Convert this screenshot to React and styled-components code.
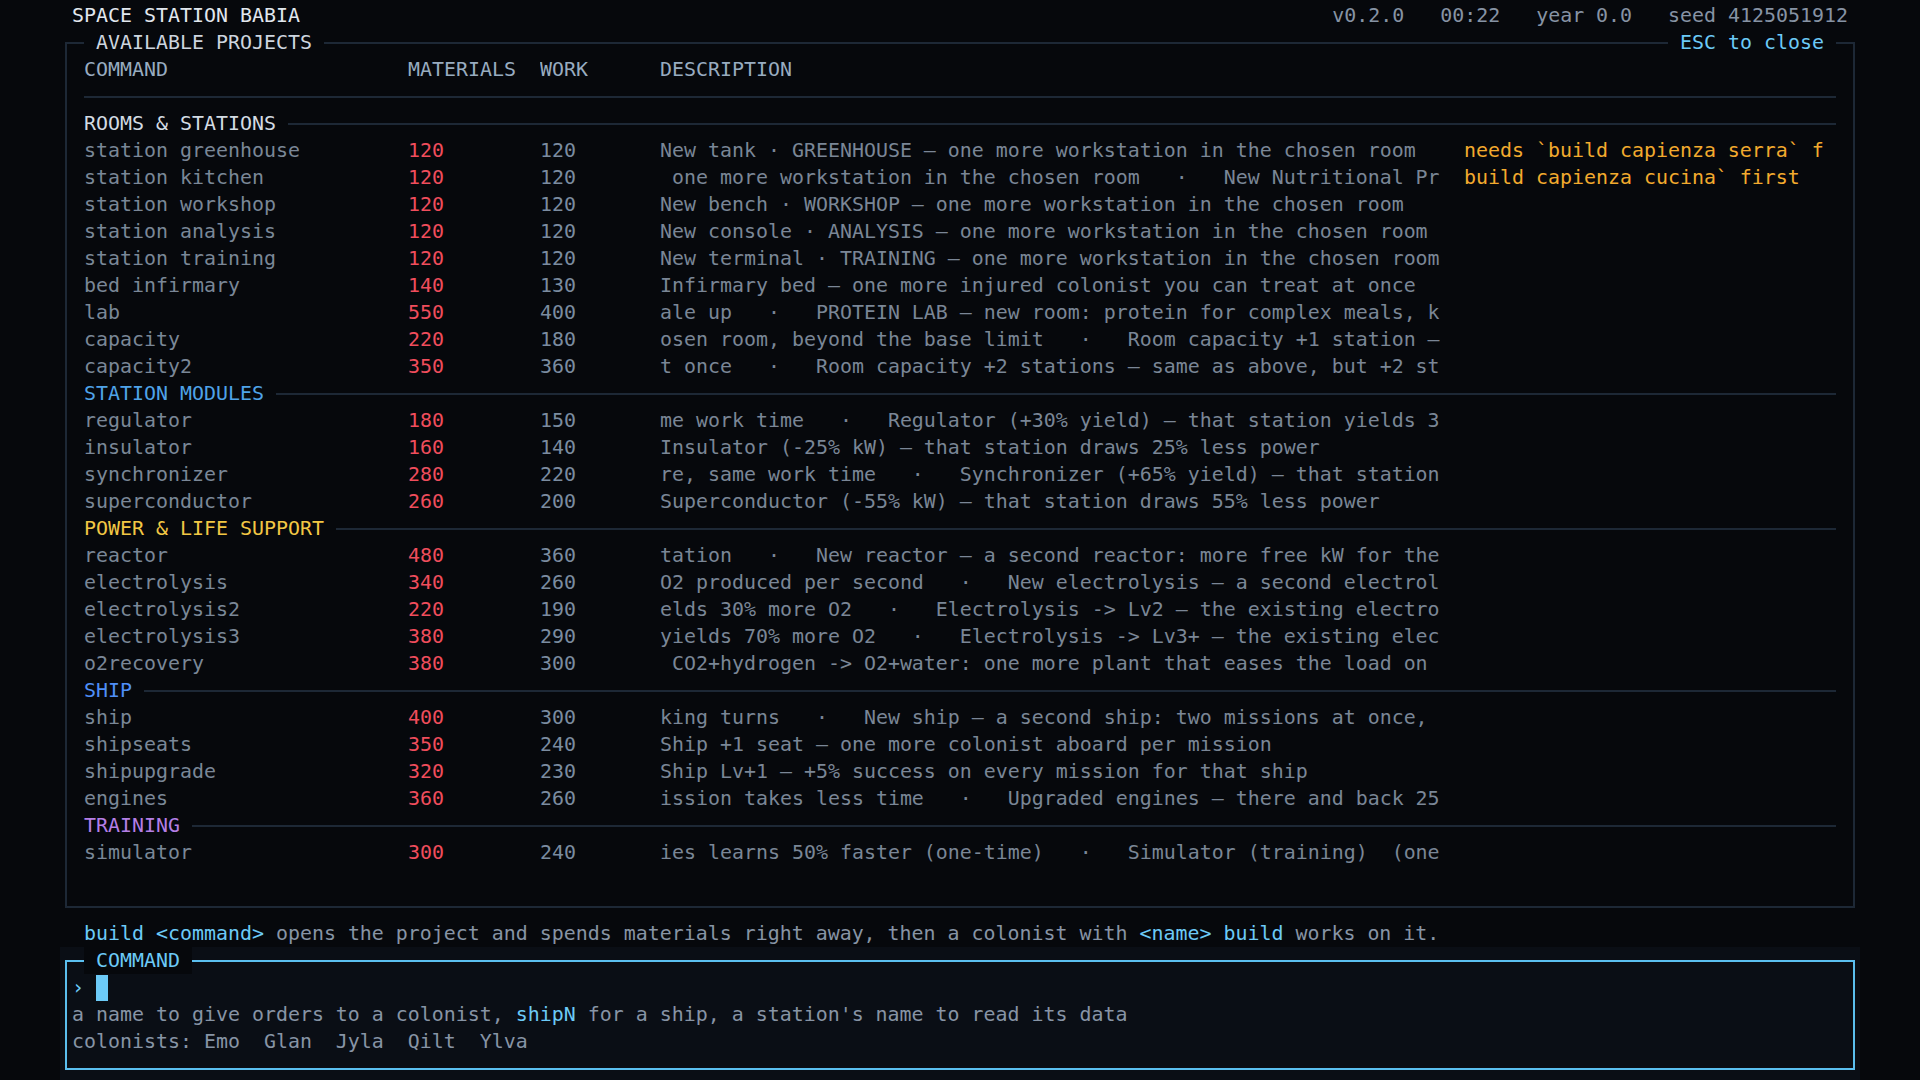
import React from "react";
import styled, { createGlobalStyle } from "styled-components";

const C = {
  bg: "#06080c",
  bgCmd: "#0a0e15",
  border: "#1d2836",
  title: "#e1e7ee",
  status: "#8693a4",
  label: "#cdd5df",
  head: "#98acc0",
  cmd: "#7a8797",
  mat: "#f04d5c",
  work: "#7b8ca0",
  desc: "#7a8696",
  note: "#f2aa2e",
  cyan: "#6ccaf7",
  cmdBorder: "#5bbff0",
  hint: "#8794a5",
};

const Global = createGlobalStyle`
  html, body { margin: 0; padding: 0; background: ${C.bg}; }
  body {
    font-family: "DejaVu Sans Mono", "Liberation Mono", monospace;
    font-size: 19.93px;
    line-height: 27px;
    color: ${C.desc};
    overflow: hidden;
  }
`;

const Screen = styled.div`
  width: 1920px;
  height: 1080px;
  box-sizing: border-box;
  padding-top: 2px;
  background: ${C.bg};
  display: flex;
  flex-direction: column;
  overflow: hidden;
`;

const TopBar = styled.div`
  height: 27px;
  padding: 0 72px;
  display: flex;
  justify-content: space-between;
  white-space: pre;
`;

const AppTitle = styled.span`
  color: ${C.title};
`;

const Status = styled.span`
  color: ${C.status};
`;

const Panel = styled.section`
  position: relative;
  box-sizing: border-box;
  height: 866px;
  margin: 13px 65px 12px 65px;
  border: 2px solid ${C.border};
  padding: 12px 17px 13px 17px;
`;

const Legend = styled.span`
  position: absolute;
  top: -15px;
  ${(p) => (p.$right ? "right: 17px;" : "left: 17px;")}
  height: 27px;
  padding: 0 12px;
  background: ${C.bg};
  color: ${(p) => p.$color};
  white-space: pre;
`;

const Row = styled.div`
  display: grid;
  grid-template-columns: 324px 132px 120px 780px 384px;
  height: 27px;
  white-space: pre;
`;

const Cell = styled.span`
  color: ${(p) => p.$color};
  overflow: hidden;
`;

const NoteCell = styled.span`
  color: ${C.note};
  padding-left: 24px;
`;

const Separator = styled.div`
  height: 27px;
  display: flex;
  align-items: center;
  &::after {
    content: "";
    flex: 1;
    height: 2px;
    background: ${C.border};
  }
`;

const Section = styled.div`
  height: 27px;
  display: flex;
  align-items: center;
  gap: 12px;
  white-space: pre;
  color: ${(p) => p.$color};
  &::after {
    content: "";
    flex: 1;
    height: 2px;
    background: ${C.border};
  }
`;

const Hint = styled.div`
  height: 27px;
  padding-left: 84px;
  white-space: pre;
  color: ${C.hint};
`;

const Accent = styled.span`
  color: ${C.cyan};
`;

const CommandArea = styled.div`
  flex: 1;
  margin: 0 60px;
  padding: 13px 5px 0 5px;
  background: ${C.bgCmd};
`;

const CommandBox = styled.div`
  position: relative;
  border: 2px solid ${C.cmdBorder};
  padding: 12px 5px 13px 5px;
`;

const Line = styled.div`
  height: 27px;
  white-space: pre;
  color: ${C.hint};
  display: flex;
  align-items: center;
`;

const Prompt = styled.span`
  color: ${C.cyan};
  width: 24px;
`;

const Cursor = styled.span`
  display: inline-block;
  width: 12px;
  height: 26px;
  background: ${C.cyan};
`;

const sections = [
  {
    name: "ROOMS & STATIONS",
    color: "#d3dbe3",
    items: [
      ["station greenhouse", 120, 120, "New tank · GREENHOUSE — one more workstation in the chosen room", "needs `build capienza serra` f"],
      ["station kitchen", 120, 120, " one more workstation in the chosen room   ·   New Nutritional Pr", "build capienza cucina` first"],
      ["station workshop", 120, 120, "New bench · WORKSHOP — one more workstation in the chosen room"],
      ["station analysis", 120, 120, "New console · ANALYSIS — one more workstation in the chosen room"],
      ["station training", 120, 120, "New terminal · TRAINING — one more workstation in the chosen room"],
      ["bed infirmary", 140, 130, "Infirmary bed — one more injured colonist you can treat at once"],
      ["lab", 550, 400, "ale up   ·   PROTEIN LAB — new room: protein for complex meals, k"],
      ["capacity", 220, 180, "osen room, beyond the base limit   ·   Room capacity +1 station —"],
      ["capacity2", 350, 360, "t once   ·   Room capacity +2 stations — same as above, but +2 st"],
    ],
  },
  {
    name: "STATION MODULES",
    color: "#4fa3e8",
    items: [
      ["regulator", 180, 150, "me work time   ·   Regulator (+30% yield) — that station yields 3"],
      ["insulator", 160, 140, "Insulator (-25% kW) — that station draws 25% less power"],
      ["synchronizer", 280, 220, "re, same work time   ·   Synchronizer (+65% yield) — that station"],
      ["superconductor", 260, 200, "Superconductor (-55% kW) — that station draws 55% less power"],
    ],
  },
  {
    name: "POWER & LIFE SUPPORT",
    color: "#f2c744",
    items: [
      ["reactor", 480, 360, "tation   ·   New reactor — a second reactor: more free kW for the"],
      ["electrolysis", 340, 260, "O2 produced per second   ·   New electrolysis — a second electrol"],
      ["electrolysis2", 220, 190, "elds 30% more O2   ·   Electrolysis -> Lv2 — the existing electro"],
      ["electrolysis3", 380, 290, "yields 70% more O2   ·   Electrolysis -> Lv3+ — the existing elec"],
      ["o2recovery", 380, 300, " CO2+hydrogen -> O2+water: one more plant that eases the load on"],
    ],
  },
  {
    name: "SHIP",
    color: "#4f8ff7",
    items: [
      ["ship", 400, 300, "king turns   ·   New ship — a second ship: two missions at once,"],
      ["shipseats", 350, 240, "Ship +1 seat — one more colonist aboard per mission"],
      ["shipupgrade", 320, 230, "Ship Lv+1 — +5% success on every mission for that ship"],
      ["engines", 360, 260, "ission takes less time   ·   Upgraded engines — there and back 25"],
    ],
  },
  {
    name: "TRAINING",
    color: "#b47fe6",
    items: [
      ["simulator", 300, 240, "ies learns 50% faster (one-time)   ·   Simulator (training)  (one"],
    ],
  },
];

export default function App() {
  return (
    <>
      <Global />
      <Screen>
        <TopBar>
          <AppTitle>SPACE STATION BABIA</AppTitle>
          <Status>{"v0.2.0   00:22   year 0.0   seed 4125051912"}</Status>
        </TopBar>

        <Panel>
          <Legend $color={C.label}>AVAILABLE PROJECTS</Legend>
          <Legend $right $color={C.cyan}>ESC to close</Legend>
          <Row>
            <Cell $color={C.head}>COMMAND</Cell>
            <Cell $color={C.head}>MATERIALS</Cell>
            <Cell $color={C.head}>WORK</Cell>
            <Cell $color={C.head}>DESCRIPTION</Cell>
          </Row>
          <Separator />
          {sections.map((s) => (
            <React.Fragment key={s.name}>
              <Section $color={s.color}>{s.name}</Section>
              {s.items.map(([cmd, mat, work, desc, note]) => (
                <Row key={cmd}>
                  <Cell $color={C.cmd}>{cmd}</Cell>
                  <Cell $color={C.mat}>{mat}</Cell>
                  <Cell $color={C.work}>{work}</Cell>
                  <Cell $color={C.desc}>{desc}</Cell>
                  {note ? <NoteCell>{note}</NoteCell> : null}
                </Row>
              ))}
            </React.Fragment>
          ))}
        </Panel>

        <Hint>
          <Accent>build &lt;command&gt;</Accent>
          {" opens the project and spends materials right away, then a colonist with "}
          <Accent>&lt;name&gt; build</Accent>
          {" works on it."}
        </Hint>

        <CommandArea>
          <CommandBox>
            <Legend $color={C.cyan}>COMMAND</Legend>
            <Line>
              <Prompt>›</Prompt>
              <Cursor />
            </Line>
            <Line>
              {"a name to give orders to a colonist, "}
              <Accent>shipN</Accent>
              {" for a ship, a station's name to read its data"}
            </Line>
            <Line>{"colonists: Emo  Glan  Jyla  Qilt  Ylva"}</Line>
          </CommandBox>
        </CommandArea>
      </Screen>
    </>
  );
}
